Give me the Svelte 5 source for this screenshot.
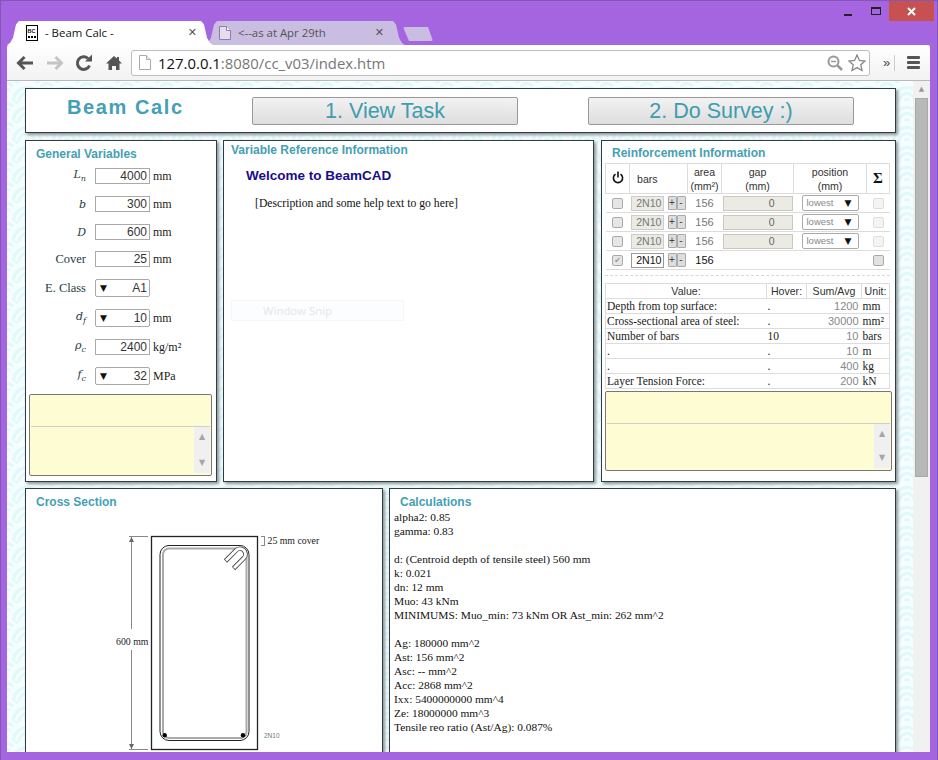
<script>
  const vars = [
    { label: 'L', sub: 'n', math: true, value: '4000', unit: 'mm' },
    { label: 'b', math: true, value: '300', unit: 'mm' },
    { label: 'D', math: true, value: '600', unit: 'mm' },
    { label: 'Cover', value: '25', unit: 'mm' },
    { label: 'E. Class', value: 'A1', select: true },
    { label: 'd', sub: 'f', math: true, value: '10', unit: 'mm', select: true },
    { label: 'ρ', sub: 'c', math: true, value: '2400', unit: 'kg/m²' },
    { label: 'f', sub: 'c', math: true, value: '32', unit: 'MPa', select: true }
  ];

  const layers = [
    { off: true }, { off: true }, { off: true }, { off: false }
  ];

  const results = [
    ['Depth from top surface:', '.', '1200', 'mm'],
    ['Cross-sectional area of steel:', '.', '30000', 'mm²'],
    ['Number of bars', '10', '10', 'bars'],
    ['.', '.', '10', 'm'],
    ['.', '.', '400', 'kg'],
    ['Layer Tension Force:', '.', '200', 'kN']
  ];

  const calcs = [
    'alpha2: 0.85', 'gamma: 0.83', '',
    'd: (Centroid depth of tensile steel) 560 mm', 'k: 0.021', 'dn: 12 mm', 'Muo: 43 kNm',
    'MINIMUMS: Muo_min: 73 kNm OR Ast_min: 262 mm^2', '',
    'Ag: 180000 mm^2', 'Ast: 156 mm^2', 'Asc: -- mm^2', 'Acc: 2868 mm^2',
    'Ixx: 5400000000 mm^4', 'Ze: 18000000 mm^3', 'Tensile reo ratio (Ast/Ag): 0.087%', '', 'T: 78 mm'
  ];
</script>

<div class="window">
  <div class="tabstrip">
    <div class="tab active">
      <svg class="favicon" width="12" height="16" viewBox="0 0 12 16">
        <rect x="0.5" y="0.5" width="11" height="15" fill="#fff" stroke="#000" />
        <text x="1.6" y="8" class="fav-text">BC</text>
        <path d="M2 11h2v2H2zM5 11h2v2H5zM8 11h2v2H8z" fill="#000" />
      </svg>
      <span class="tab-title">- Beam Calc -</span>
      <span class="tab-close">✕</span>
    </div>
    <div class="tab inactive">
      <svg width="12" height="14" viewBox="0 0 12 14">
        <path d="M.5.5h7l4 4v9H.5z" fill="#e6dcf2" stroke="#8a80a0" />
        <path d="M7.5.5v4h4" fill="#fff" stroke="#8a80a0" />
      </svg>
      <span class="tab-title">&lt;--as at Apr 29th</span>
      <span class="tab-close">✕</span>
    </div>
    <div class="newtab"></div>
    <div class="controls">
      <span class="min"></span>
      <span class="max"></span>
      <span class="close">
        <svg width="9" height="9" viewBox="0 0 9 9"><path d="M1 1l7 7M8 1L1 8" stroke="#fff" stroke-width="2" /></svg>
      </span>
    </div>
  </div>

  <div class="toolbar">
    <svg class="nav" width="20" height="16" viewBox="0 0 20 16">
      <path d="M9.5 2L3.5 8l6 6M4 8h14" fill="none" stroke="#555" stroke-width="3" />
    </svg>
    <svg class="nav" width="20" height="16" viewBox="0 0 20 16">
      <path d="M10.5 2l6 6-6 6M16 8H2" fill="none" stroke="#c4c4c4" stroke-width="3" />
    </svg>
    <svg class="nav" width="21" height="18" viewBox="0 0 21 18">
      <path d="M14.5 11.5A6.3 6.3 0 1 1 13 4.5" fill="none" stroke="#555" stroke-width="3" />
      <path d="M10 7.5h7V.5z" fill="#555" />
    </svg>
    <svg class="home" width="16" height="16" viewBox="0 0 16 16">
      <path d="M8 1L0 8.5h2.5V15H6v-4h4v4h3.5V8.5H16l-3-3V2h-2v1.5z" fill="#555" />
    </svg>
    <div class="omnibox">
      <svg width="12" height="15" viewBox="0 0 12 15">
        <path d="M.5.5h7l4 4v10H.5z" fill="#fff" stroke="#aaa" />
        <path d="M7.5.5v4h4" fill="#eee" stroke="#aaa" />
      </svg>
      <span class="url"><b>127.0.0.1</b>:8080/cc_v03/index.htm</span>
      <svg width="16" height="16" viewBox="0 0 16 16">
        <circle cx="6.5" cy="6.5" r="5" fill="#fff" stroke="#999" stroke-width="2" />
        <path d="M4 6.5h5" stroke="#999" stroke-width="1.5" />
        <path d="M10.5 10.5L15 15" stroke="#999" stroke-width="2.5" />
      </svg>
      <svg width="18" height="18" viewBox="0 0 18 18">
        <path d="M9 1l2.4 5.4 5.6.6-4.2 3.8 1.2 5.7L9 13.6l-5 2.9 1.2-5.7L1 7l5.6-.6z" fill="#fff" stroke="#888" stroke-width="1.3" />
      </svg>
    </div>
    <span class="more">»</span>
    <span class="sep"></span>
    <span class="menu"><i></i><i></i><i></i></span>
  </div>

  <div class="viewport">
    <div class="page">
      <header class="panel top">
        <h1>Beam Calc</h1>
        <button>1. View Task</button>
        <button>2. Do Survey :)</button>
      </header>

      <div class="middle">
        <section class="panel general">
          <h3>General Variables</h3>
          <div class="vars">
            {#each vars as v}
              <div class="var">
                <span class="vlabel" class:math={v.math}>{v.label}{#if v.sub}<sub>{v.sub}</sub>{/if}</span>
                <span class="vbox" class:sel={v.select}>
                  {#if v.select}<span class="arrow">▼</span>{/if}
                  {v.value}
                </span>
                {#if v.unit}<span class="vunit">{v.unit}</span>{/if}
              </div>
            {/each}
          </div>
          <div class="note">
            <div class="note-head"></div>
            <div class="note-body"><div class="minibar"><span>▲</span><span>▼</span></div></div>
          </div>
        </section>

        <section class="panel reference">
          <h3>Variable Reference Information</h3>
          <h2>Welcome to BeamCAD</h2>
          <p>[Description and some help text to go here]</p>
          <div class="snip"><span>Window Snip</span></div>
        </section>

        <section class="panel reinforcement">
          <h3>Reinforcement Information</h3>
          <table class="layers">
            <thead>
              <tr>
                <th class="power">
                  <svg width="12" height="13" viewBox="0 0 12 13">
                    <path d="M3.5 3.2a4.6 4.6 0 1 0 5 0" fill="none" stroke="#111" stroke-width="1.6" />
                    <path d="M6 .5v6" stroke="#111" stroke-width="1.6" />
                  </svg>
                </th>
                <th class="bars">bars</th>
                <th>area<br />(mm²)</th>
                <th>gap<br />(mm)</th>
                <th>position<br />(mm)</th>
                <th class="sigma">Σ</th>
              </tr>
            </thead>
            <tbody>
              {#each layers as l}
                <tr class:off={l.off}>
                  <td><span class="check" class:ticked={!l.off}>{#if !l.off}✔{/if}</span></td>
                  <td class="barcell">
                    <span class="barbox">2N10</span><span class="step">+</span><span class="step">-</span>
                  </td>
                  <td class="area">156</td>
                  <td>{#if l.off}<span class="gapbox">0</span>{/if}</td>
                  <td>{#if l.off}<span class="posbox">lowest<span class="arrow">▼</span></span>{/if}</td>
                  <td><span class="check sum"></span></td>
                </tr>
              {/each}
            </tbody>
          </table>
          <div class="dashed"></div>
          <table class="results">
            <thead>
              <tr><th>Value:</th><th>Hover:</th><th>Sum/Avg</th><th>Unit:</th></tr>
            </thead>
            <tbody>
              {#each results as r}
                <tr>
                  <td>{r[0]}</td><td>{r[1]}</td><td class="num">{r[2]}</td><td>{r[3]}</td>
                </tr>
              {/each}
            </tbody>
          </table>
          <div class="note wide">
            <div class="note-head"></div>
            <div class="note-body"><div class="minibar"><span>▲</span><span>▼</span></div></div>
          </div>
        </section>
      </div>

      <div class="bottom">
        <section class="panel cross">
          <h3>Cross Section</h3>
          <svg class="drawing" width="280" height="232" viewBox="0 0 280 232">
            <g fill="none" stroke="#222">
              <rect x="58.5" y="8.5" width="106" height="213" stroke-width="1.3" />
              <rect x="67" y="17.5" width="89" height="195" rx="9" />
            </g>
            <rect x="70" y="20.5" width="83.5" height="189.5" rx="6" fill="none" stroke="#aaa" stroke-width="2" />
            <path d="M132.5 33L143 22.5A4.9 4.9 0 0 1 151 30L140.5 40.5" fill="none" stroke="#444" stroke-width="4.6" />
            <path d="M133 32.5L143 22.5A4.9 4.9 0 0 1 151 30L141 40" fill="none" stroke="#fff" stroke-width="3" />
            <circle cx="71.7" cy="207.3" r="2.2" fill="#000" />
            <circle cx="150" cy="207.3" r="2.2" fill="#000" />
            <g stroke="#888" fill="none">
              <path d="M36 8.5h19M36 221.5h19M38.5 9v92M38.5 122v99" />
              <path d="M168 8.5h4M168 17.5h4M171.5 9v8" />
            </g>
            <path d="M38.5 9l-2.5 5h5zM38.5 221l-2.5-5h5z" fill="#666" />
            <text x="23" y="117" class="dim">600 mm</text>
            <text x="174.5" y="16" class="dim">25 mm cover</text>
            <text x="171" y="210" class="tiny">2N10</text>
          </svg>
        </section>

        <section class="panel calcs">
          <h3>Calculations</h3>
          <div class="calc-lines">
            {#each calcs as line}
              <div class="line">{line || '\u00a0'}</div>
            {/each}
          </div>
        </section>
      </div>
    </div>

    <div class="scrollbar">
      <span class="sarrow">▲</span>
      <span class="thumb"></span>
    </div>
  </div>
</div>

<style>
  :global(body) {
    margin: 0;
    overflow: hidden;
    height: 760px;
  }

  .window {
    height: 760px;
    box-sizing: border-box;
    background: #a665e0;
    border: 1px solid #8457b4;
    border-bottom: 0;
    padding: 20px 7px 8px 6px;
    display: flex;
    flex-direction: column;
    overflow: hidden;
    font-family: 'Liberation Serif', serif;
  }

  /* tabs */
  .tabstrip {
    display: flex;
    align-items: flex-end;
    height: 24px;
    position: relative;
    font-family: 'Open Sans', sans-serif;
    font-size: 11.4px;
    flex: none;
  }

  .tab {
    height: 24px;
    display: flex;
    align-items: center;
    gap: 7px;
    box-sizing: border-box;
    position: relative;
    padding-bottom: 1px;
  }

  .tab.active {
    width: 206px;
    padding-left: 19px;
    padding-right: 16px;
    background: #fff;
    color: #111;
    z-index: 2;
    clip-path: polygon(0 100%, 3px 92%, 6px 70%, 9px 15%, 12px 0, 194px 0, 197px 15%, 200px 70%, 203px 92%, 206px 100%);
  }

  .tab.inactive {
    width: 200px;
    margin-left: -8px;
    padding-left: 14px;
    padding-right: 21px;
    background: #c9bde1;
    color: #555;
    clip-path: polygon(0 100%, 3px 92%, 6px 70%, 9px 15%, 12px 0, 188px 0, 191px 15%, 194px 70%, 197px 92%, 200px 100%);
  }

  .tab-title {
    flex: 1;
  }

  .tab-close {
    font-size: 11px;
    color: #555;
    font-weight: 700;
    font-family: 'DejaVu Sans', sans-serif;
  }

  .fav-text {
    font: 700 5.5px 'Liberation Sans', sans-serif;
    fill: #111;
  }

  .newtab {
    width: 30px;
    height: 14px;
    margin: 0 0 4px -2px;
    background: #c9bde1;
    clip-path: polygon(0 0, 25px 0, 30px 100%, 6px 100%);
    border-radius: 2px;
  }

  .controls {
    position: absolute;
    top: -20px;
    right: -4px;
    display: flex;
    align-items: flex-start;
  }

  .min {
    width: 8px;
    height: 2px;
    background: #222;
    margin: 13px 19px 0 0;
  }

  .max {
    width: 8px;
    height: 5px;
    border: 1px solid #222;
    border-top-width: 2px;
    margin: 6px 8px 0 0;
  }

  .close {
    width: 45px;
    height: 20px;
    background: #c75050;
    display: flex;
    align-items: center;
    justify-content: center;
  }

  /* toolbar */
  .toolbar {
    height: 36px;
    flex: none;
    background: linear-gradient(#fff, #f2f2f2);
    border-bottom: 1px solid #b8b8b8;
    border-radius: 2px 2px 0 0;
    display: flex;
    align-items: center;
    padding: 0 10px 0 8px;
    box-sizing: border-box;
    font-family: 'Liberation Sans', sans-serif;
  }

  .nav {
    margin-right: 10px;
  }

  .home {
    margin-right: 9px;
  }

  .omnibox {
    flex: 1;
    height: 26px;
    border: 1px solid #bdbdbd;
    border-radius: 3px;
    background: #fff;
    display: flex;
    align-items: center;
    padding: 0 3px 0 7px;
    box-sizing: border-box;
    gap: 5px;
  }

  .url {
    flex: 1;
    margin-left: 2px;
    font-size: 14.9px;
    color: #777;
    font-family: 'Open Sans', sans-serif;
  }

  .url b {
    font-weight: 400;
    color: #111;
  }

  .more {
    font-size: 13px;
    width: 6px;
    color: #444;
    margin-left: 13px;
  }

  .sep {
    width: 1px;
    height: 16px;
    margin-left: 5px;
    background: #ccc;
  }

  .menu {
    display: flex;
    flex-direction: column;
    gap: 2px;
    width: 13px;
    margin-left: 12px;
  }

  .menu i {
    height: 3px;
    border-radius: 1px;
    background: #555;
  }

  /* page */
  .viewport {
    flex: 1;
    display: flex;
    min-height: 0;
  }

  .page {
    flex: 1;
    min-width: 0;
    padding: 7px 17px 0 18px;
    display: flex;
    flex-direction: column;
    gap: 7px;
    overflow: hidden;
    background-color: #f6fdfe;
    background-image:
      radial-gradient(circle at 20px 20px, #e2f9fc 0 3px, #f6fdfe 3px 6px, #e2f9fc 6px 9px, #f6fdfe 9px 12px, #e2f9fc 12px 15px, #f6fdfe 15px 20px, transparent 20px),
      radial-gradient(circle at 20px 20px, #e2f9fc 0 3px, #f6fdfe 3px 6px, #e2f9fc 6px 9px, #f6fdfe 9px 12px, #e2f9fc 12px 15px, #f6fdfe 15px 20px, transparent 20px);
    background-size: 40px 20px;
    background-position: 0 0, 20px 10px;
  }

  .scrollbar {
    width: 17px;
    flex: none;
    background: #f1f1f1;
    display: flex;
    flex-direction: column;
    align-items: center;
    box-sizing: border-box;
    padding: 0 2px;
  }

  .sarrow {
    font-size: 7px;
    line-height: 17px;
    height: 17px;
    color: #9a9a9a;
    font-family: 'DejaVu Sans', sans-serif;
  }

  .thumb {
    width: 100%;
    height: 379px;
    background: #b8b8b8;
    border: 1px solid #a8a8a8;
    box-sizing: border-box;
  }

  .panel {
    background: #fff;
    border: 1px solid #2c3e44;
    box-shadow: 2px 2px 3px #8a9294;
    box-sizing: border-box;
  }

  h3 {
    margin: 0;
    font: 700 12px 'Liberation Sans', sans-serif;
    color: #45a0b4;
  }

  .top {
    height: 45px;
    flex: none;
    display: grid;
    grid-template-columns: 226px 266px 70px 266px;
    align-items: start;
    padding-top: 8px;
  }

  .top h1 {
    margin: -1px 0 0 41px;
    font: 700 20px 'Liberation Sans', sans-serif;
    letter-spacing: 1.6px;
    color: #45a0b4;
    white-space: nowrap;
  }

  .top button {
    grid-column: 2;
    height: 28px;
    padding: 0;
    border: 1px solid #999;
    border-radius: 2px;
    background: linear-gradient(#f2f2f2, #dedede);
    color: #3f9cb0;
    font: 21.5px 'Liberation Sans', sans-serif;
  }

  .top button:last-child {
    grid-column: 4;
  }

  .middle {
    display: grid;
    grid-template-columns: 192px 372px 295px;
    grid-template-rows: 342px;
    column-gap: 6px;
    height: 342px;
    flex: none;
  }

  .general {
    padding: 6px 4px 5px 3px;
    display: flex;
    flex-direction: column;
    min-height: 0;
  }

  .general h3 {
    padding-left: 7px;
  }

  .vars {
    display: grid;
    grid-template-rows: 28px 28px 27px 29px 30px 29px 29px 28px;
    margin-top: 1px;
  }

  .var {
    display: flex;
    align-items: center;
    height: 28px;
    font-size: 12px;
  }

  .vlabel {
    width: 57px;
    text-align: right;
    color: #1f3c44;
    font-size: 12.5px;
    flex: none;
  }

  .vlabel.math {
    font-family: 'DejaVu Serif', serif;
    font-style: italic;
    font-size: 11px;
  }

  .vlabel sub {
    font-size: 8px;
  }

  .vbox {
    width: 55px;
    height: 16px;
    margin-left: 9px;
    border: 1px solid #aaa;
    box-sizing: border-box;
    text-align: right;
    padding-right: 2px;
    font: 12px/14px 'Liberation Sans', sans-serif;
    color: #333;
    position: relative;
    flex: none;
  }

  .vbox.sel {
    height: 18px;
    line-height: 16px;
    border-radius: 2px;
  }

  .vbox .arrow {
    position: absolute;
    left: 4px;
    top: 0;
    font-size: 9px;
    color: #111;
    font-family: 'DejaVu Sans', sans-serif;
  }

  .vunit {
    margin-left: 3px;
    font-size: 12px;
    color: #222;
  }

  .note {
    border: 1px solid #777;
    border-radius: 2px;
    background: #fefcd3;
    height: 82px;
    margin-top: auto;
    padding: 0 1px;
    display: flex;
    flex-direction: column;
    box-sizing: border-box;
    flex: none;
  }

  .note-head {
    height: 31px;
    border-bottom: 1px solid #cfcfc8;
    flex: none;
  }

  .note-body {
    flex: 1;
    display: flex;
    justify-content: flex-end;
    padding-bottom: 2px;
  }

  .minibar {
    width: 16px;
    background: #f0f0f0;
    color: #a6a6a6;
    font: 8px/1 'DejaVu Sans', sans-serif;
    display: flex;
    flex-direction: column;
    justify-content: space-between;
    align-items: center;
    padding: 6px 0;
    box-sizing: border-box;
  }

  .reference {
    padding: 2px 7px;
    margin-right: 1px;
    position: relative;
  }

  .reference h2 {
    margin: 11px 0 0 15px;
    font: 700 13.5px 'Liberation Sans', sans-serif;
    color: #1a0d8c;
  }

  .reference p {
    margin: 14px 0 0 24px;
    font-size: 11.7px;
    color: #111;
  }

  .snip {
    position: absolute;
    left: 7px;
    top: 159px;
    width: 173px;
    height: 21px;
    border: 1px solid #f3f6fa;
    background: #fcfdfe;
    font: 11.4px/20px 'Open Sans', sans-serif;
    color: #e4e6ea;
    box-sizing: border-box;
    padding-left: 31px;
  }

  .reinforcement {
    padding: 5px 3px 5px 3px;
    display: flex;
    flex-direction: column;
    min-height: 0;
  }

  .reinforcement h3 {
    padding-left: 7px;
    height: 17px;
    flex: none;
  }

  table {
    border-collapse: collapse;
    table-layout: fixed;
    width: 285px;
    flex: none;
  }

  .layers {
    font: 10.6px 'Liberation Sans', sans-serif;
  }

  .layers th,
  .layers td {
    border: 1px solid #dcdcdc;
    padding: 0;
    text-align: center;
    font-weight: 400;
    color: #333;
    box-sizing: border-box;
  }

  .layers td {
    border-left: 0;
    border-right: 0;
    height: 19px;
  }

  .layers th {
    height: 30px;
    line-height: 14px;
  }

  .layers th:nth-child(1) { width: 24px; }
  .layers th:nth-child(2) { width: 58px; }
  .layers th:nth-child(3) { width: 34px; }
  .layers th:nth-child(4) { width: 72px; }
  .layers th:nth-child(5) { width: 73px; }

  .layers th.bars {
    text-align: left;
    padding-left: 7px;
  }

  .layers th.sigma {
    font: 700 15px 'Liberation Serif', serif;
    color: #111;
  }

  .check {
    display: inline-block;
    width: 9px;
    height: 9px;
    border: 1px solid #aaa;
    border-radius: 2px;
    background: #e6e6e6;
    vertical-align: middle;
    font: 8px/9px 'DejaVu Sans', sans-serif;
    color: #999;
    box-sizing: content-box;
  }

  .check.sum {
    background: #e2e2e2;
  }

  .off .check.sum {
    background: #f4f4f4;
    border-color: #ddd;
  }

  .layers td.barcell {
    text-align: left;
    white-space: nowrap;
    padding-left: 1px;
  }

  .barbox {
    display: inline-block;
    width: 33px;
    height: 15px;
    border: 1px solid #999;
    box-sizing: border-box;
    text-align: right;
    padding-right: 1px;
    line-height: 13px;
    margin-right: 4px;
    vertical-align: middle;
    color: #111;
    background: #fff;
  }

  .off .barbox {
    background: #ebebe4;
    border-color: #ccc;
    color: #777;
  }

  .step {
    display: inline-block;
    width: 9px;
    height: 14px;
    box-sizing: border-box;
    background: #ddd;
    border: 1px solid #aaa;
    border-radius: 1px;
    line-height: 11px;
    text-align: center;
    font-size: 10px;
    vertical-align: middle;
    color: #444;
  }

  .layers td.area {
    color: #111;
    font-size: 11px;
  }

  .off td.area {
    color: #777;
  }

  .gapbox {
    display: block;
    width: 70px;
    height: 15px;
    margin: 0 auto;
    background: #ebebe4;
    border: 1px solid #c8c8c0;
    box-sizing: border-box;
    text-align: right;
    padding-right: 17px;
    line-height: 13px;
    color: #666;
    font-size: 10.5px;
  }

  .posbox {
    display: block;
    width: 57px;
    height: 16px;
    margin: 0 auto;
    border: 1px solid #aaa;
    border-radius: 2px;
    box-sizing: border-box;
    text-align: left;
    padding-left: 4px;
    line-height: 14px;
    font-size: 9.5px;
    color: #888;
    position: relative;
  }

  .posbox .arrow {
    position: absolute;
    right: 6px;
    top: 0;
    font-family: 'DejaVu Sans', sans-serif;
    font-size: 9px;
    color: #111;
  }

  .dashed {
    border-top: 1px dashed #d8d8d8;
    margin: 5px 0 7px;
    width: 285px;
    flex: none;
  }

  .results {
    font-size: 11.5px;
    color: #222;
  }

  .results th {
    font: 400 10.6px 'Liberation Sans', sans-serif;
    height: 15px;
    color: #333;
    padding: 0;
    border: 1px solid #dcdcdc;
    box-sizing: border-box;
  }

  .results th:nth-child(1) { width: 161px; }
  .results th:nth-child(2) { width: 40px; }
  .results th:nth-child(3) { width: 55px; }

  .results td {
    border-top: 1px solid #dcdcdc;
    border-bottom: 1px solid #dcdcdc;
    padding: 0 0 0 1px;
    height: 15px;
    box-sizing: border-box;
    line-height: 13px;
    white-space: nowrap;
  }

  .results tr {
    border-left: 1px solid #dcdcdc;
    border-right: 1px solid #dcdcdc;
  }

  .results td.num {
    text-align: right;
    font: 11px 'Liberation Sans', sans-serif;
    color: #888;
    padding-right: 3px;
  }

  .note.wide {
    height: 80px;
    width: 287px;
    margin-top: 2px;
  }

  .bottom {
    display: grid;
    grid-template-columns: 358px 507px;
    column-gap: 6px;
    flex: 1;
    min-height: 0;
    margin-top: -1px;
  }

  .cross {
    padding: 6px 10px;
    height: 300px;
  }

  .drawing {
    display: block;
    margin: 19px 0 0 57px;
    overflow: visible;
  }

  .drawing text {
    font-family: 'Liberation Serif', serif;
  }

  .dim {
    font-size: 9.8px;
    fill: #222;
  }

  .drawing text.tiny {
    font-size: 6.5px;
    font-family: 'Liberation Sans', sans-serif;
    fill: #777;
  }

  .calcs {
    padding: 6px 4px;
    height: 300px;
  }

  .calcs h3 {
    padding-left: 6px;
  }

  .calc-lines {
    font-size: 11.4px;
    line-height: 14px;
    color: #111;
    margin-top: 1px;
  }
</style>
